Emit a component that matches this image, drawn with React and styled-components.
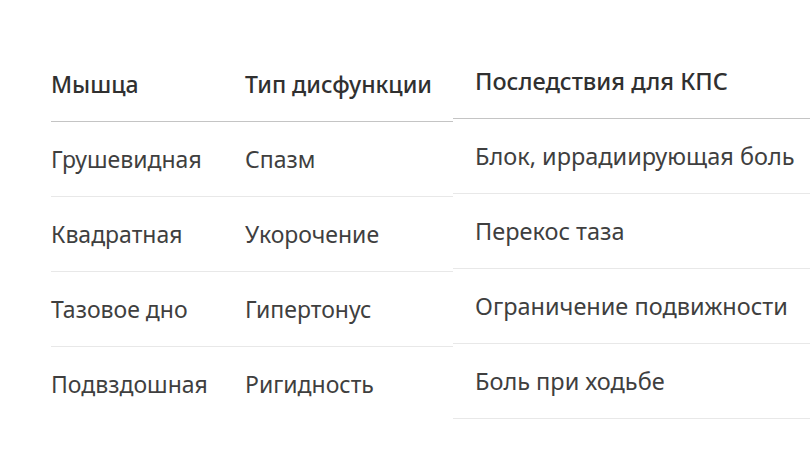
import React from 'react'
import styled, { createGlobalStyle } from 'styled-components'

const left = [
  ['Грушевидная', 'Спазм'],
  ['Квадратная', 'Укорочение'],
  ['Тазовое дно', 'Гипертонус'],
  ['Подвздошная', 'Ригидность'],
]

const right = [
  'Блок, иррадиирующая боль',
  'Перекос таза',
  'Ограничение подвижности',
  'Боль при ходьбе',
]

export default function App() {
  return (
    <>
      <GlobalStyle />
      <Page>
        <LeftTable>
          <Row head>
            <Cell first head>Мышца</Cell>
            <Cell head>Тип дисфункции</Cell>
          </Row>
          {left.map(([muscle, kind], i) => (
            <Row key={muscle} last={i === left.length - 1}>
              <Cell first>{muscle}</Cell>
              <Cell>{kind}</Cell>
            </Row>
          ))}
        </LeftTable>
        <RightTable>
          <Row head>
            <Cell head pad>Последствия для КПС</Cell>
          </Row>
          {right.map((text) => (
            <Row key={text}>
              <Cell pad>{text}</Cell>
            </Row>
          ))}
        </RightTable>
      </Page>
    </>
  )
}

const GlobalStyle = createGlobalStyle`
  body {
    margin: 0;
    background: #ffffff;
    font-family: 'Noto Sans', 'Open Sans', sans-serif;
  }
`

const Page = styled.div`
  display: flex;
  align-items: flex-start;
  padding: 47px 0 0 51px;
  width: 810px;
  height: 450px;
  box-sizing: border-box;
  overflow: hidden;
`

const LeftTable = styled.div`
  width: 402px;
  flex: 0 0 402px;
`

const RightTable = styled.div`
  flex: 0 0 360px;
  margin-top: -3px;
`

const Row = styled.div`
  display: flex;
  align-items: center;
  height: 75px;
  box-sizing: border-box;
  border-bottom: 1px solid
    ${(p) => (p.head ? '#c4c4c4' : p.last ? 'transparent' : '#e8e8e8')};
`

const Cell = styled.div`
  flex: ${(p) => (p.first ? '0 0 194px' : '1')};
  padding-left: ${(p) => (p.pad ? '22px' : '0')};
  font-size: ${(p) => (p.pad ? '23.5px' : '23px')};
  font-weight: ${(p) => (p.head ? 500 : 400)};
  color: ${(p) => (p.head ? '#303030' : '#3f3f3f')};
  white-space: nowrap;
`
